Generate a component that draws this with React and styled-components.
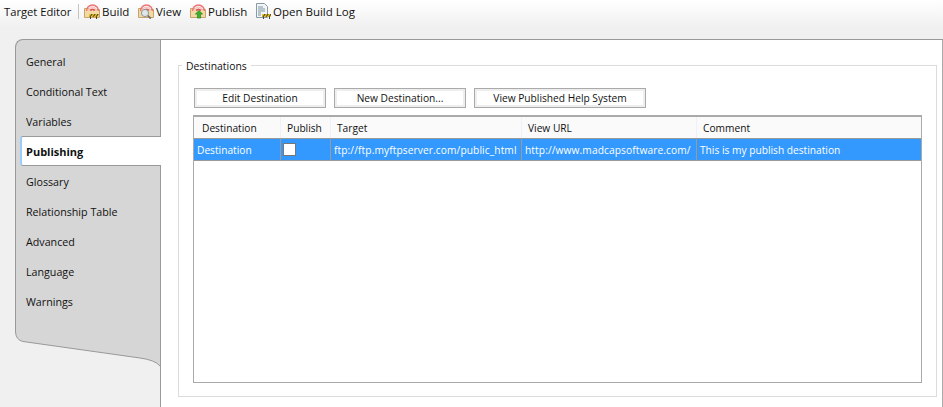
import React from 'react';
import styled, { createGlobalStyle } from 'styled-components';

const GlobalStyle = createGlobalStyle`
  html, body {
    margin: 0;
    padding: 0;
    background: #f0f0f0;
  }
  body {
    font-family: "Open Sans", "Liberation Sans", Arial, sans-serif;
    font-size: 10.2px;
    color: #111;
  }
`;

const tabs = ['General', 'Conditional Text', 'Variables', 'Publishing', 'Glossary', 'Relationship Table', 'Advanced', 'Language', 'Warnings'];

const columns = [
  { title: 'Destination', width: 87, value: 'Destination' },
  { title: 'Publish', width: 50, check: true },
  { title: 'Target', width: 191, value: 'ftp://ftp.myftpserver.com/public_html', url: true },
  { title: 'View URL', width: 175, value: 'http://www.madcapsoftware.com/', url: true },
  { title: 'Comment', width: 224, value: 'This is my publish destination' },
];

const Rainbow = () => (
  <g fill="none" strokeWidth="1.5">
    <path d="M2.5 8a6 6 0 0 1 12 0" stroke="#ee7474" />
    <path d="M4.7 8a3.8 3.8 0 0 1 7.6 0" stroke="#fac4c4" />
    <path d="M6.8 8a1.7 1.7 0 0 1 3.4 0" stroke="#e65050" />
  </g>
);

const Folder = () => (
  <path d="M0.5 5.5h4l1 1h10v8h-15z" fill="#f3d9a4" stroke="#c9a468" />
);

const Barrier = ({ x = 5 }) => (
  <g transform={`translate(${x} 10)`}>
    <path d="M1.5 3v3.5M7.5 3v3.5" stroke="#444" />
    <rect x="0" y="1" width="9.5" height="2.8" fill="#e8c020" />
    <path d="M1 3.8l2.2-2.8M4 3.8l2.2-2.8M7 3.8l2.2-2.8" stroke="#222" />
  </g>
);

const BuildIcon = () => (
  <Icon viewBox="0 0 16 16">
    <Folder />
    <Rainbow />
    <Barrier />
  </Icon>
);

const ViewIcon = () => (
  <Icon viewBox="0 0 16 16">
    <Folder />
    <Rainbow />
    <circle cx="7" cy="10" r="3.6" fill="#dfe6ea" stroke="#8d969c" />
    <path d="M9.8 12.6l3 3" stroke="#6d6d6d" strokeWidth="1.8" />
  </Icon>
);

const PublishIcon = () => (
  <Icon viewBox="0 0 16 16">
    <Folder />
    <Rainbow />
    <path d="M9 7.5l3.6 3.6h-2v4h-3.2v-4h-2z" fill="#3cb02c" stroke="#1f7a18" strokeWidth="0.6" />
  </Icon>
);

const LogIcon = () => (
  <Icon viewBox="0 0 16 16">
    <path d="M1.5 0.5h8l3 3v11h-11z" fill="#f1f5f7" stroke="#8a9aa3" />
    <path d="M3 4h5M3 6h7M3 8h7M3 10h3M3 12h3" stroke="#7d93a0" />
    <Barrier x={7} />
  </Icon>
);

const toolItems = [
  { label: 'Build', icon: <BuildIcon />, width: 54 },
  { label: 'View', icon: <ViewIcon />, width: 52 },
  { label: 'Publish', icon: <PublishIcon />, width: 65 },
  { label: 'Open Build Log', icon: <LogIcon />, width: 104 },
];

export default function App() {
  return (
    <>
      <GlobalStyle />
      <Page>
        <Toolbar>
          <ToolbarTitle>Target Editor</ToolbarTitle>
          <ToolbarDivider />
          {toolItems.map((item) => (
            <ToolItem key={item.label} $width={item.width}>
              {item.icon}
              <span>{item.label}</span>
            </ToolItem>
          ))}
        </Toolbar>
        <Editor>
          <Sidebar>
            <TabList>
              {tabs.map((tab) => (
                <Tab key={tab} $active={tab === 'Publishing'}>{tab}</Tab>
              ))}
            </TabList>
            <TabTail viewBox="0 0 145 37">
              <path d="M0.5 0V2Q1 10 8 11.5L125 28Q140 30 145 36V0Z" fill="#d6d6d6" />
              <path d="M0.5 0V2Q1 10 8 11.5L125 28Q140 30 145 36" fill="none" stroke="#999" />
            </TabTail>
          </Sidebar>
          <Content>
            <GroupBox>
              <Legend>Destinations</Legend>
              <ButtonRow>
                <Button $width={132}>Edit Destination</Button>
                <Button $width={132}>New Destination...</Button>
                <Button $width={172}>View Published Help System</Button>
              </ButtonRow>
              <Table>
                <HeaderRow>
                  {columns.map((col) => (
                    <HeaderCell key={col.title} $width={col.width}>{col.title}</HeaderCell>
                  ))}
                </HeaderRow>
                <SelectedRow>
                  {columns.map((col) => (
                    <RowCell key={col.title} $width={col.width} $check={col.check} $url={col.url}>
                      {col.check ? <Checkbox /> : col.value}
                    </RowCell>
                  ))}
                </SelectedRow>
              </Table>
            </GroupBox>
          </Content>
        </Editor>
      </Page>
    </>
  );
}

const Page = styled.div`
  width: 943px;
  height: 407px;
  display: flex;
  flex-direction: column;
  overflow: hidden;
`;

const Toolbar = styled.div`
  flex: none;
  height: 22px;
  padding: 0 0 17px 4px;
  display: flex;
  align-items: center;
  background: linear-gradient(#ffffff, #f0f0f0 70%);
  font-size: 11.5px;
  white-space: nowrap;
`;

const ToolbarTitle = styled.span`
  width: 67px;
  font-size: 11.2px;
`;

const ToolbarDivider = styled.div`
  width: 1px;
  height: 15px;
  margin: 0 5px 0 7px;
  background: #c4c4c4;
`;

const ToolItem = styled.div`
  width: ${(p) => p.$width}px;
  display: flex;
  align-items: center;
  gap: 2px;
`;

const Icon = styled.svg`
  width: 16px;
  height: 16px;
  flex: none;
`;

const Editor = styled.div`
  flex: 1;
  min-height: 0;
  display: flex;
  margin-left: 15px;
`;

const Sidebar = styled.div`
  width: 145px;
  flex: none;
  border-right: 1px solid #999;
  display: flex;
  flex-direction: column;
`;

const TabList = styled.div`
  height: 291px;
  box-sizing: border-box;
  padding: 7px 0 0 4px;
  background: #d6d6d6;
  border: 1px solid #999;
  border-width: 1px 0 0 1px;
  border-top-left-radius: 8px;
`;

const Tab = styled.div`
  height: 30px;
  box-sizing: border-box;
  display: flex;
  align-items: center;
  padding-left: ${(p) => (p.$active ? '4px' : '6px')};
  font-size: ${(p) => (p.$active ? '11px' : '10.7px')};
  font-weight: ${(p) => (p.$active ? 'bold' : 'normal')};
  ${(p) => p.$active && `
    margin: -1px -1px 1px 0;
    background: #fff;
    border: 1px solid #999;
    border-width: 1px 0;
    border-left: 2px solid #99ccff;
    border-radius: 3px 0 0 3px;
    position: relative;
    z-index: 1;
  `}
`;

const TabTail = styled.svg`
  width: 145px;
  height: 37px;
  display: block;
`;

const Content = styled.div`
  flex: 1;
  background: #fff;
  border-top: 1px solid #999;
  border-right: 3px solid #aaa;
  padding: 25px 5px 10px 17px;
  display: flex;
`;

const GroupBox = styled.div`
  position: relative;
  flex: 1;
  box-sizing: border-box;
  border: 1px solid #dcdcdc;
  padding: 22px 14px 13px 15px;
`;

const Legend = styled.span`
  position: absolute;
  top: -7px;
  left: 3px;
  padding: 0 4px;
  background: #fff;
  line-height: 14px;
  font-size: 10.4px;
`;

const ButtonRow = styled.div`
  display: flex;
  gap: 8px;
`;

const Button = styled.div`
  width: ${(p) => p.$width}px;
  height: 20px;
  box-sizing: border-box;
  display: flex;
  align-items: center;
  justify-content: center;
  background: #fff;
  border: 1px solid #aaa;
  box-shadow: inset 0 0 0 2px #eeeeee;
`;

const Table = styled.div`
  margin: 7px 0 0 -1px;
  height: 268px;
  box-sizing: border-box;
  border: 1px solid #aaa;
  border-top-width: 2px;
  background: #fff;
`;

const HeaderRow = styled.div`
  display: flex;
  height: 21px;
  background: #fafafa;
`;

const HeaderCell = styled.div`
  width: ${(p) => p.$width}px;
  box-sizing: border-box;
  padding-left: 6px;
  display: flex;
  align-items: center;
  border-right: 1px solid #eef2f8;
  &:first-child {
    padding-left: 8px;
  }
  &:last-child {
    border-right: none;
  }
`;

const SelectedRow = styled.div`
  display: flex;
  height: 23px;
  box-sizing: border-box;
  background: #3399ff;
  border: 1px solid #999;
  border-width: 1px 0;
  color: #fff;
`;

const RowCell = styled.div`
  width: ${(p) => p.$width}px;
  box-sizing: border-box;
  padding-left: ${(p) => (p.$check ? '2px' : '3px')};
  letter-spacing: ${(p) => (p.$url ? '0.1px' : 'normal')};
  display: flex;
  align-items: center;
  white-space: nowrap;
  overflow: hidden;
  border-right: 1px solid #999;
  &:last-child {
    border-right: none;
  }
`;

const Checkbox = styled.div`
  width: 13px;
  height: 13px;
  box-sizing: border-box;
  background: #fff;
  border: 1px solid #777;
`;
